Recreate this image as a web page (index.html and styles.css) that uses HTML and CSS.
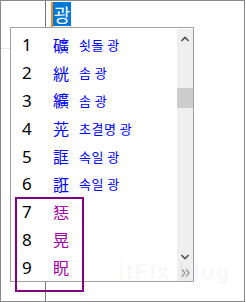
FILE: index.html
```html
<!DOCTYPE html>
<html>
<head>
  <title>IME candidates</title>
  <link rel="stylesheet" href="styles.css">
</head>
<body>
  <div class="frame">
    <div class="side"><div class="side-top"></div></div>
    <div class="editor">
      <span class="caret"></span>
      <span class="sel">광</span>
    </div>
  </div>

  <div class="popup">
    <ul class="list">
      <li class="row"><span class="num">1</span><span class="han">礦</span><span class="read">쇳돌 광</span></li>
      <li class="row"><span class="num">2</span><span class="han">絖</span><span class="read">솜 광</span></li>
      <li class="row"><span class="num">3</span><span class="han">纊</span><span class="read">솜 광</span></li>
      <li class="row"><span class="num">4</span><span class="han">茪</span><span class="read">초결명 광</span></li>
      <li class="row"><span class="num">5</span><span class="han">誆</span><span class="read">속일 광</span></li>
      <li class="row"><span class="num">6</span><span class="han">誑</span><span class="read">속일 광</span></li>
      <li class="row alt"><span class="num">7</span><span class="han">㤮</span></li>
      <li class="row alt"><span class="num">8</span><span class="han">晃</span></li>
      <li class="row alt"><span class="num">9</span><span class="han">眖</span></li>
    </ul>
    <div class="scroll">
      <div class="btn">
        <svg width="8" height="6" viewBox="0 0 8 6"><polyline points="0.5,5 4,1.5 7.5,5" fill="none" stroke="#555" stroke-width="1.6"/></svg>
      </div>
      <div class="thumb"></div>
      <div class="track"></div>
      <div class="btn small">
        <svg width="8" height="6" viewBox="0 0 8 6"><polyline points="0.5,1 4,4.5 7.5,1" fill="none" stroke="#555" stroke-width="1.6"/></svg>
      </div>
      <div class="btn small">
        <svg width="9" height="8" viewBox="0 0 9 8"><polyline points="1,0.5 4,4 1,7.5" fill="none" stroke="#999" stroke-width="1.2"/><polyline points="5,0.5 8,4 5,7.5" fill="none" stroke="#999" stroke-width="1.2"/></svg>
      </div>
    </div>
  </div>

  <div class="mark"></div>
  <div class="watermark">itFix blog</div>
</body>
</html>
```

FILE: styles.css
```css
body {
  margin: 0;
  position: relative;
  background-color: #fff;
  font-family: "Noto Sans", "Noto Sans CJK KR", sans-serif;
}
.frame {
  box-sizing: border-box;
  width: 245px;
  height: 302px;
  border: 1px solid #8a8a8a;
  display: grid;
  grid-template-columns: 45px 1fr;
}
.side {
  border-right: 1px solid #777;
}
.side-top {
  height: 47px;
  border-bottom: 1px solid #e4e4e4;
}
.editor {
  display: flex;
  align-items: flex-start;
  padding: 1px 0 0 5px;
}
.caret {
  width: 2px;
  height: 25px;
  background-color: #f28c28;
}
.sel {
  width: 18px;
  height: 24px;
  line-height: 24px;
  text-align: center;
  background-color: #0078d7;
  color: #fff;
  font-family: "Noto Sans CJK KR", sans-serif;
  font-size: 18px;
}
.popup {
  position: absolute;
  left: 10px;
  top: 27px;
  box-sizing: border-box;
  width: 184px;
  height: 255px;
  border: 1px solid #a0a0a0;
  background-color: #fff;
  display: flex;
}
.list {
  flex: 1;
  margin: 0;
  padding: 3px 0 0 0;
  list-style: none;
  display: flex;
  flex-direction: column;
}
.row {
  flex: 1;
  display: flex;
  align-items: center;
  padding-left: 11px;
}
.num {
  width: 31px;
  font-size: 17px;
  color: #000;
}
.han {
  width: 26px;
  font-family: "Noto Sans CJK KR", sans-serif;
  font-size: 16px;
  color: #0000ff;
}
.read {
  font-family: "Noto Sans CJK KR", sans-serif;
  font-size: 13px;
  letter-spacing: 0.5px;
  color: #0000ff;
}
.alt .han {
  color: #a000a0;
}
.scroll {
  width: 16px;
  height: 252px;
  margin-top: 1px;
  background-color: #efefef;
  display: flex;
  flex-direction: column;
}
.btn {
  height: 20px;
  display: flex;
  align-items: center;
  justify-content: center;
}
.btn.small {
  height: 16px;
}
.thumb {
  height: 20px;
  margin-top: 39px;
  background-color: #cdcdcd;
}
.track {
  flex: 1;
}
.mark {
  position: absolute;
  left: 15px;
  top: 197px;
  box-sizing: border-box;
  width: 69px;
  height: 95px;
  border: 2px solid #800080;
}
.watermark {
  position: absolute;
  left: 118px;
  top: 259px;
  font-family: "Liberation Sans", sans-serif;
  font-weight: bold;
  font-size: 22px;
  letter-spacing: 1.5px;
  color: rgba(0, 0, 0, 0.035);
  pointer-events: none;
}
```
